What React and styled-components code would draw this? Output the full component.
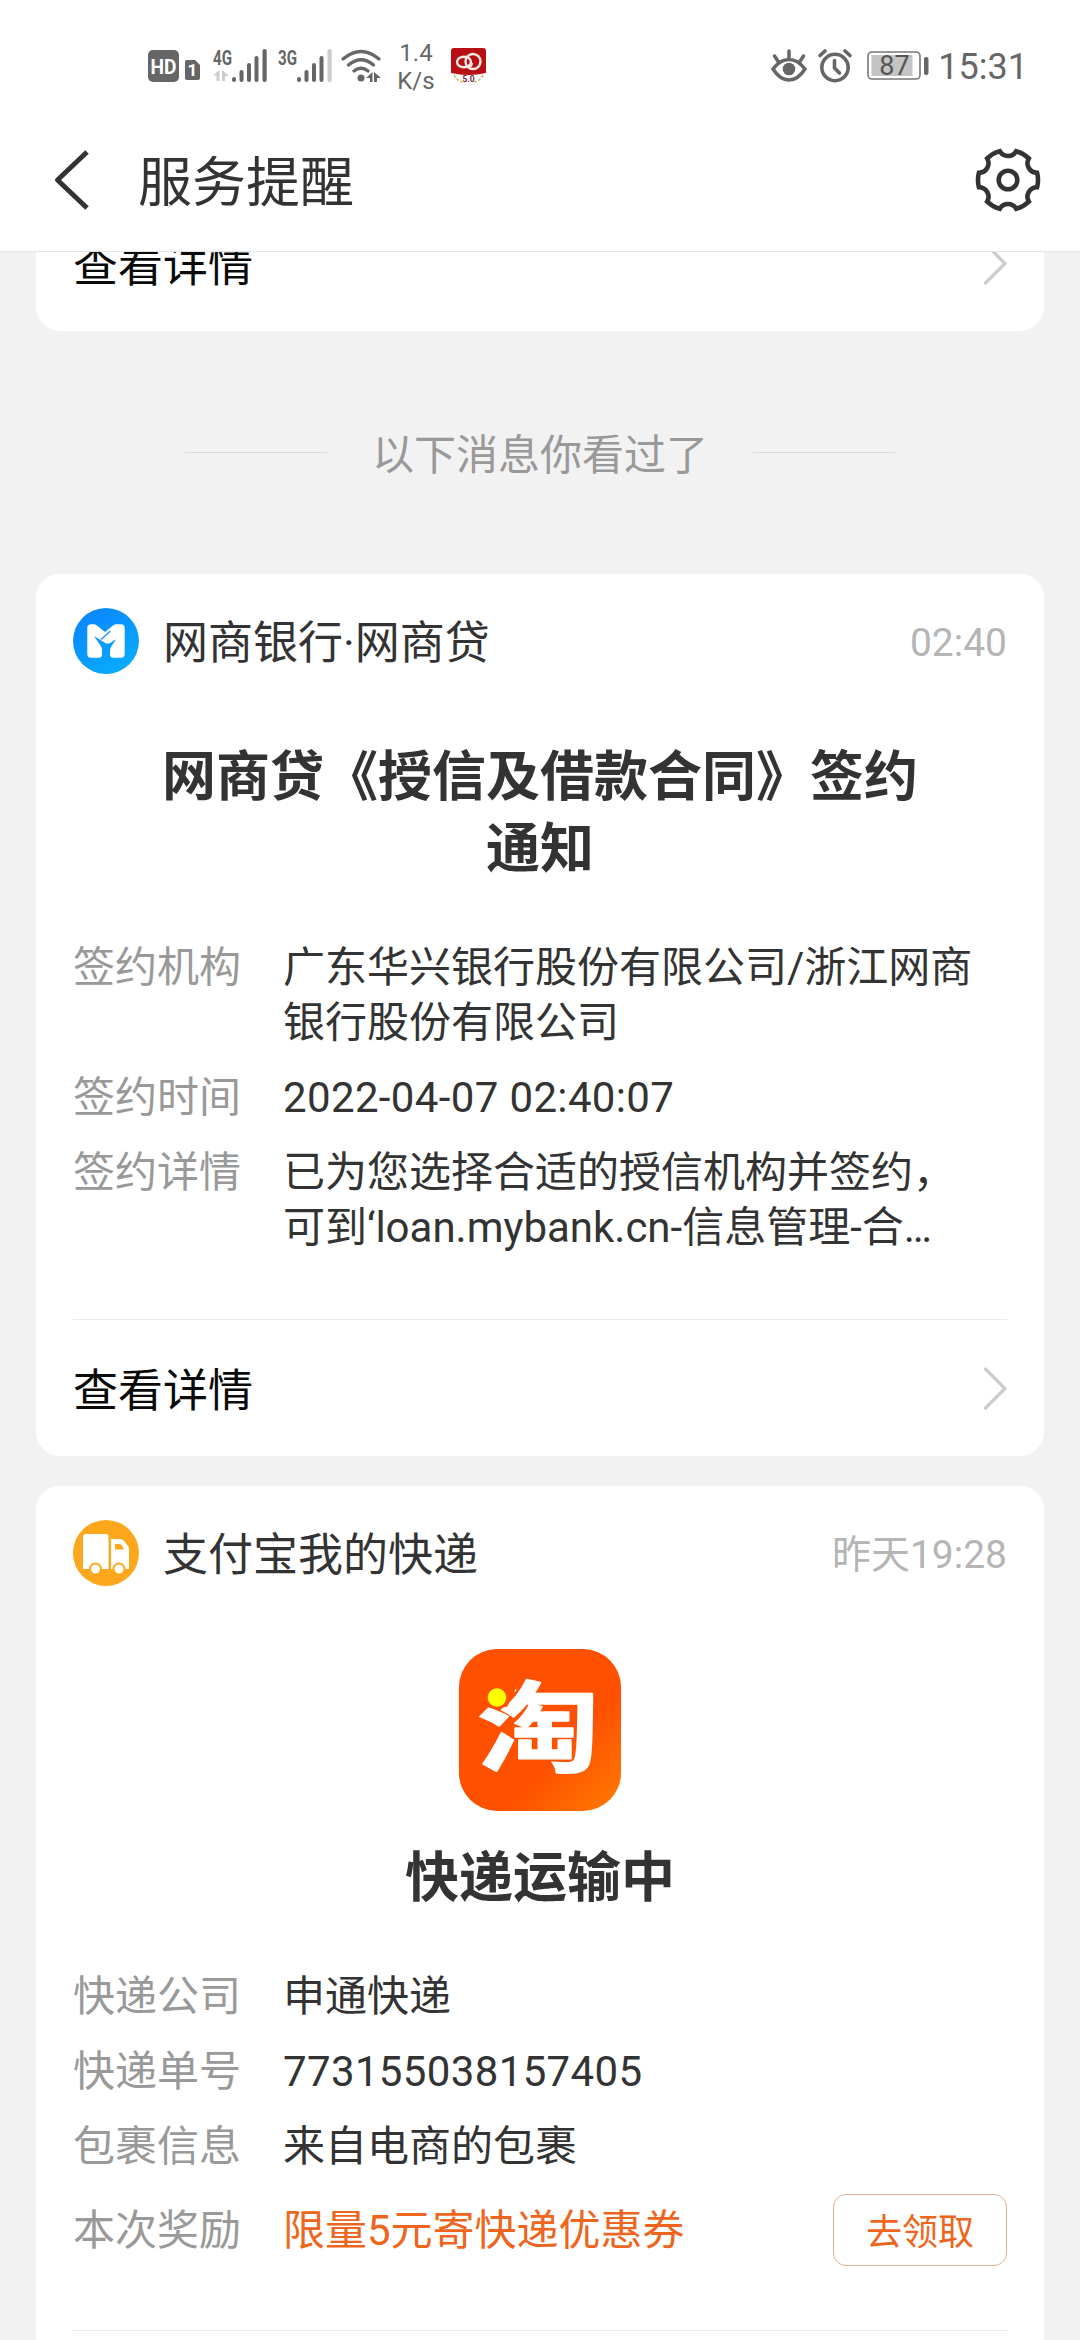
import React from 'react'
import styled, { createGlobalStyle } from 'styled-components'

const GlobalStyle = createGlobalStyle`
    *{
        box-sizing: border-box;
    }

    body{
        margin: 0;
        background-color: #f2f2f2;
        color: #333;
        font-family: Roboto, "Noto Sans CJK SC", sans-serif;
    }
`

const Screen = styled.div`
    width: 1080px;
    height: 2340px;
    display: flex;
    flex-direction: column;
    overflow: hidden;
    background-color: #f2f2f2;
`

const StatusBar = styled.div`
    flex: none;
    height: 108px;
    padding: 24px 52px 0 147px;
    display: flex;
    justify-content: space-between;
    background-color: #fff;
    color: #666;

    svg{
        display: block;
        overflow: visible;
    }
`

const StatusGroup = styled.div`
    height: 84px;
    display: flex;
    align-items: center;
`

const Gap = styled.div`
    width: ${props => props.$w}px;
`

const NetSpeed = styled.div`
    width: 50px;
    margin: 1px 10px 0 9px;
    font-size: 24px;
    line-height: 28px;
    text-align: center;
`

const Clock = styled.div`
    margin: 2px 0 0 9px;
    font-size: 36px;
    line-height: 42px;
`

const NavBar = styled.header`
    flex: none;
    height: 144px;
    padding: 0 36px 0 52px;
    display: flex;
    align-items: center;
    background-color: #fff;
    border-bottom: 1px solid #e5e5e5;

    h1{
        flex: 1;
        margin: 8px 0 0 44px;
        font-size: 54px;
        font-weight: 400;
        line-height: 72px;
    }
`

const Feed = styled.main`
    flex: 1;
    min-height: 0;
    padding: 0 36px;
    overflow: hidden;
`

const Card = styled.section`
    margin-top: ${props => props.$offset || 0}px;
    padding: 0 37px;
    border-radius: 24px;
    background-color: #fff;
`

const CardHead = styled.div`
    height: 134px;
    display: flex;
    align-items: center;
`

const CardName = styled.div`
    flex: 1;
    margin-left: 24px;
    font-size: 45px;
    line-height: 60px;
    padding-top: 6px;
`

const CardTime = styled.div`
    font-size: 39px;
    line-height: 50px;
    padding-top: 3px;
    color: #b5b5b5;
`

const CardTitle = styled.h2`
    margin: ${props => props.$top}px 80px 0;
    font-size: 54px;
    font-weight: 700;
    line-height: 72px;
    text-align: center;
`

const AppLogo = styled.div`
    display: flex;
    justify-content: center;
    padding-top: 29px;
`

const Details = styled.dl`
    margin: 54px 0 0;
    padding-bottom: 64px;
    display: flex;
    flex-direction: column;
    gap: 20px;
`

const DetailRow = styled.div`
    display: flex;
    align-items: ${props => props.$center ? 'center' : 'flex-start'};
    font-size: 42px;
    line-height: 55px;

    dt{
        width: 210px;
        flex: none;
        color: #999;
    }

    dd{
        flex: 1;
        margin: 0;
        padding-right: 20px;
        color: ${props => props.$center ? '#ee6520' : '#333'};
        letter-spacing: ${props => props.$numeric ? '0.36px' : 'normal'};
    }
`

const ClaimButton = styled.button`
    width: 174px;
    height: 72px;
    padding: 0 0 2px;
    border: 1px solid #deb294;
    border-radius: 13px;
    background: none;
    color: #ee6520;
    font-family: inherit;
    font-size: 36px;
`

const CardFoot = styled.div`
    height: 137px;
    display: flex;
    align-items: center;
    justify-content: space-between;
    border-top: 1px solid #ebebeb;
    color: #0a0a0a;
    font-size: 45px;
    line-height: 60px;

    span{
        padding-top: 7px;
    }

    svg{
        margin-top: 2px;
    }
`

const ReadDivider = styled.div`
    height: 243px;
    display: flex;
    align-items: center;
    justify-content: center;
    gap: 45px;
    color: #999;
    font-size: 42px;
    line-height: 56px;

    &::before,
    &::after{
        content: '';
        width: 142px;
        height: 1px;
        background-color: #dadada;
    }

    span{
        padding-top: 6px;
    }
`

const HdIcon = () => (
    <svg width="54" height="34" viewBox="0 0 54 34" fill="#666">
        <rect x="1" y="1" width="31" height="32" rx="5" />
        <text x="16.5" y="25" fontSize="21" fontWeight="700" textAnchor="middle" textLength="26" lengthAdjust="spacingAndGlyphs" fill="#fff">HD</text>
        <path d="M38 13q0-2 2-2h8l5 5v13q0 2-2 2H40q-2 0-2-2z" />
        <text x="45.5" y="27" fontSize="17" fontWeight="700" textAnchor="middle" fill="#fff">1</text>
    </svg>
)

const SignalIcon = ({ label, weak }) => (
    <svg width="56" height="34" viewBox="0 0 56 34" fill="#666">
        <text x="0" y="15.5" fontSize="21" fontWeight="700" textLength="19" lengthAdjust="spacingAndGlyphs">{label}</text>
        {!weak && <path d="M6.500 21v11H3.500v-5.500H0zM9 21l7 6H12v5H9z" fill="#ccc" />}
        <rect x="19" y="28" width="4" height="5" rx="2" />
        <rect x="26.5" y="21" width="4" height="12" rx="2" />
        <rect x="34" y="14" width="4" height="19" rx="2" />
        <rect x="41.5" y="7" width="4" height="26" rx="2" />
        <rect x="49.5" y="0" width="4.2" height="33" rx="2" fill={weak ? '#ccc' : '#666'} />
    </svg>
)

const WifiIcon = () => (
    <svg width="41" height="34" viewBox="0 0 41 34" fill="none" stroke="#666" strokeWidth="3.4" strokeLinecap="round">
        <path d="M2 10Q20 -5 38 10M7.5 16Q20 5.500 32.5 16M13 22Q20 16.500 27 22" />
        <circle cx="20" cy="29" r="3.500" fill="#666" stroke="none" />
        <path d="M31.500 23v10h-2.500v-4h-4zM33 23l7 6H36v4h-3z" fill="#666" stroke="none" />
    </svg>
)

const PartyIcon = () => (
    <svg width="36" height="36" viewBox="0 0 36 36">
        <path d="M0 3q0-3 3-3h29q3 0 3 3v22q-17 4-35 0z" fill="#b80f14" />
        <g fill="none" stroke="#fbe9e2" strokeWidth="2.400">
            <ellipse cx="13" cy="14" rx="7" ry="5.300" />
            <circle cx="22" cy="13.500" r="7.500" />
            <path d="M15 18q5 3 6-3" />
        </g>
        <path d="M3 27q3 6 9 7M32 27q-3 6-9 7" fill="none" stroke="#d8c98a" strokeWidth="2" strokeDasharray="3 1.500" />
        <text x="17.500" y="34" fontSize="8.500" fontWeight="700" textAnchor="middle" fill="#7d2433">5.0</text>
    </svg>
)

const EyeIcon = () => (
    <svg width="36" height="34" viewBox="0 0 36 34" fill="none" stroke="#666" strokeWidth="3.500" strokeLinecap="round">
        <path d="M2 20Q9 10.500 18 10.500T34 20Q27 31 18 31T2 20zM18 2v7M3.500 7l4 6M32.500 7l-4 6" />
        <circle cx="18" cy="20" r="6.300" fill="#666" stroke="none" />
    </svg>
)

const AlarmIcon = () => (
    <svg width="34" height="34" viewBox="0 0 34 34" fill="none" stroke="#666" strokeWidth="3.600" strokeLinecap="round">
        <circle cx="17" cy="18.500" r="13.200" />
        <path d="M16.500 11.500v7.500l5 5M2 6.500l5-4.500M32 6.500l-5-4.500" />
    </svg>
)

const BatteryIcon = () => (
    <svg width="62" height="32" viewBox="0 0 62 32">
        <rect x="1" y="2" width="52" height="27" rx="4" fill="none" stroke="#777" strokeWidth="1.600" />
        <rect x="4.500" y="5" width="41" height="21" fill="#c4c4c4" />
        <rect x="57" y="7" width="4.500" height="18" rx="2" fill="#666" />
        <text x="27.500" y="25" fontSize="27" textAnchor="middle" fill="#555">87</text>
    </svg>
)

const BackIcon = () => (
    <svg width="42" height="60" viewBox="0 0 42 60" fill="none" stroke="#333" strokeWidth="5">
        <path d="M35 2L5.500 30L35 58" strokeLinejoin="round" />
    </svg>
)

// six teeth with a round notch between every two of them
const gearPath = () => {
    const point = (deg) => {
        const rad = (deg - 90) * Math.PI / 180;
        return `${(36 + 30 * Math.cos(rad)).toFixed(2)} ${(36 + 30 * Math.sin(rad)).toFixed(2)}`;
    }
    let d = `M${point(-16)}`;
    for(let i = 0; i < 6; i++){
        d += `A9.500 9.500 0 0 0 ${point(i * 60 + 16)}A30 30 0 0 1 ${point(i * 60 + 44)}`;
    }
    return d + 'z';
}

const GearIcon = () => (
    <svg width="72" height="72" viewBox="0 0 72 72" fill="none" stroke="#333" strokeWidth="4.600">
        <path d={gearPath()} />
        <circle cx="36" cy="36" r="9.300" />
    </svg>
)

const ArrowIcon = () => (
    <svg width="26" height="44" viewBox="0 0 26 44" fill="none" stroke="#ccc" strokeWidth="3.200" strokeLinecap="round">
        <path d="M4.500 2L24 21.500L4.500 41" />
    </svg>
)

const BankIcon = () => (
    <svg width="66" height="66" viewBox="0 0 66 66">
        <defs>
            <linearGradient id="bank" x1="0.2" y1="0" x2="0.8" y2="1">
                <stop offset="0" stopColor="#0a84ff" />
                <stop offset="1" stopColor="#08aefc" />
            </linearGradient>
        </defs>
        <circle cx="33" cy="33" r="33" fill="url(#bank)" />
        <path d="M14.300 20q0-3.700 3.700-3.700h2.500q2 0 3.500 1.200l8 6.500 8-6.500q1.500-1.200 3.500-1.200H48q3.700 0 3.700 3.700v26q0 3.700-3.700 3.700h-8q-3 0-3-3v-4q0-2.500 1.500-4.500l4.500-7-5.500 3.500q-3.500 2-6.500-.5L21 28l6.500 9.500q1.500 2 1.500 4.500v4.700q0 3-3 3h-8q-3.700 0-3.700-3.700z" fill="#fff" />
        <path d="M28 31.500L37.500 23" stroke="#1193ff" strokeWidth="1.300" />
    </svg>
)

const TruckIcon = () => (
    <svg width="66" height="66" viewBox="0 0 66 66">
        <circle cx="33" cy="33" r="33" fill="#fca71c" />
        <path d="M10 17q0-3 3-3h20q2.500 0 2.500 3v32H10z" fill="#fff" />
        <path d="M38 19h9q2 0 3.500 1.500L55 26q1 1.500 1 3v20H38z" fill="#fff" />
        <path d="M42 24h4q2 0 3 1.500l2 4H42z" fill="#fca71c" />
        <g fill="#fff" stroke="#fca71c" strokeWidth="2">
            <circle cx="22.500" cy="49" r="5.500" />
            <circle cx="46" cy="49" r="5.500" />
        </g>
    </svg>
)

const TaobaoIcon = () => (
    <svg width="162" height="162" viewBox="0 0 162 162">
        <defs>
            <linearGradient id="taobao" x1="0.5" y1="0.5" x2="1" y2="1">
                <stop offset="0.25" stopColor="#ff5000" />
                <stop offset="1" stopColor="#ff7c00" />
            </linearGradient>
        </defs>
        <rect width="162" height="162" rx="38" fill="url(#taobao)" />
        <text transform="translate(18 115) scale(1.24 1)" fontSize="99" fontWeight="700" fontFamily="'Noto Sans CJK SC'" fill="#fff" stroke="#fff" strokeWidth="1.500" strokeLinejoin="round">淘</text>
        {/* the yellow dot takes the place of the first drop */}
        <path d="M16 24H62L55 44L48 58L18 55z" fill="#ff5000" />
        <circle cx="38" cy="48.500" r="9.300" fill="#ffff00" />
    </svg>
)

const loanDetails = [
    { label: '签约机构', value: '广东华兴银行股份有限公司/浙江网商银行股份有限公司' },
    { label: '签约时间', value: '2022-04-07 02:40:07', numeric: true },
    { label: '签约详情', value: '已为您选择合适的授信机构并签约，可到‘loan.mybank.cn-信息管理-合…' },
]

const parcelDetails = [
    { label: '快递公司', value: '申通快递' },
    { label: '快递单号', value: '773155038157405', numeric: true },
    { label: '包裹信息', value: '来自电商的包裹' },
    { label: '本次奖励', value: '限量5元寄快递优惠券', action: '去领取' },
]

const DetailList = ({ items }) => (
    <Details>
        {items.map(item => (
            <DetailRow key={item.label} $center={!!item.action} $numeric={item.numeric}>
                <dt>{item.label}</dt>
                <dd>{item.value}</dd>
                {item.action && <ClaimButton>{item.action}</ClaimButton>}
            </DetailRow>
        ))}
    </Details>
)

const MoreRow = () => (
    <CardFoot>
        <span>查看详情</span>
        <ArrowIcon />
    </CardFoot>
)

const App = () => {
  return (
    <Screen>
        <GlobalStyle />
        <StatusBar>
            <StatusGroup>
                <HdIcon />
                <Gap $w={12} />
                <SignalIcon label="4G" />
                <Gap $w={9} />
                <SignalIcon label="3G" weak />
                <Gap $w={7} />
                <WifiIcon />
                <NetSpeed>1.4<br />K/s</NetSpeed>
                <PartyIcon />
            </StatusGroup>
            <StatusGroup>
                <EyeIcon />
                <Gap $w={11} />
                <AlarmIcon />
                <Gap $w={15} />
                <BatteryIcon />
                <Clock>15:31</Clock>
            </StatusGroup>
        </StatusBar>
        <NavBar>
            <BackIcon />
            <h1>服务提醒</h1>
            <GearIcon />
        </NavBar>
        <Feed>
            <Card $offset={-58}>
                <MoreRow />
            </Card>
            <ReadDivider><span>以下消息你看过了</span></ReadDivider>
            <Card>
                <CardHead>
                    <BankIcon />
                    <CardName>网商银行·网商贷</CardName>
                    <CardTime>02:40</CardTime>
                </CardHead>
                <CardTitle $top={34}>网商贷《授信及借款合同》签约通知</CardTitle>
                <DetailList items={loanDetails} />
                <MoreRow />
            </Card>
            <Card $offset={30}>
                <CardHead>
                    <TruckIcon />
                    <CardName>支付宝我的快递</CardName>
                    <CardTime>昨天19:28</CardTime>
                </CardHead>
                <AppLogo><TaobaoIcon /></AppLogo>
                <CardTitle $top={32}>快递运输中</CardTitle>
                <DetailList items={parcelDetails} />
                <MoreRow />
            </Card>
        </Feed>
    </Screen>
  )
}

export default App
